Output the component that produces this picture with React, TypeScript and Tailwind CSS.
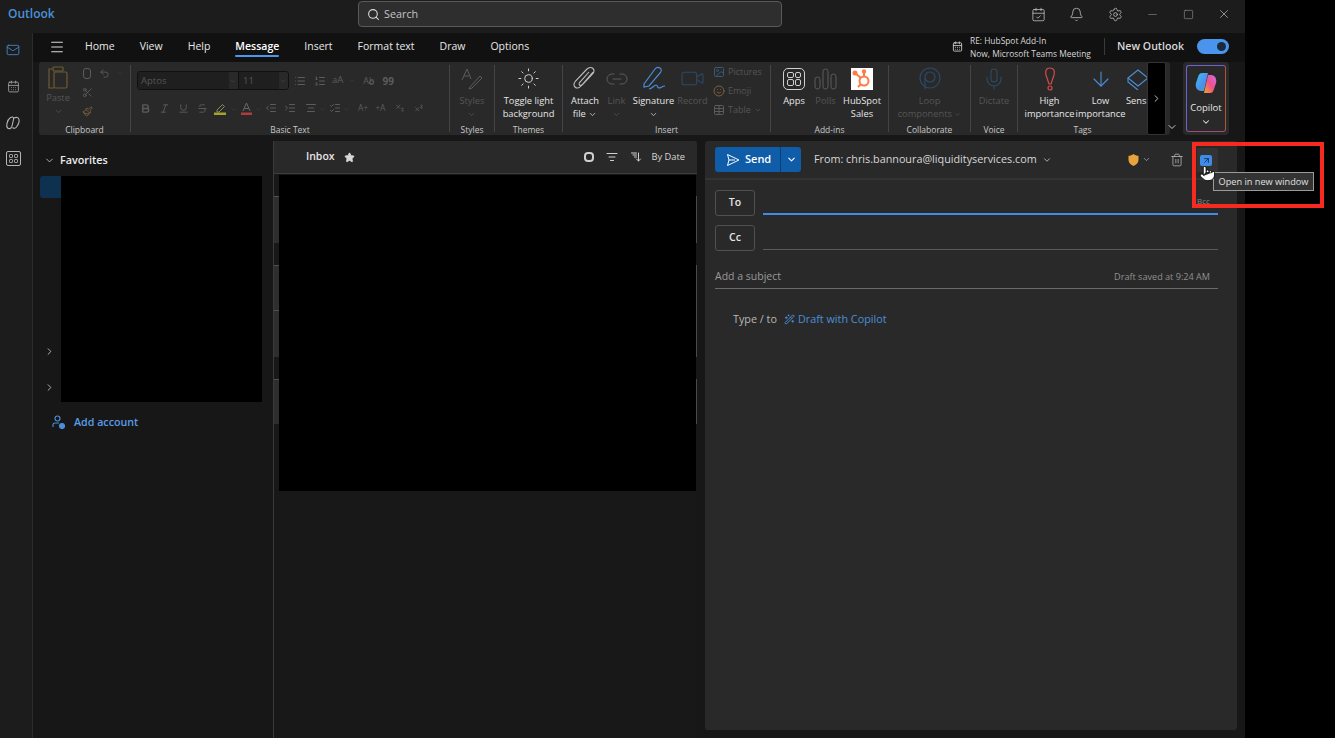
import React from "react";
import {
  Search, Bell, Settings, Minus, Square, X, Mail, ChevronDown, ChevronRight, Star,
  Trash2, Menu, Scissors, Undo2, Paintbrush, Bold, Italic, Underline, Strikethrough,
  List, ListOrdered, Indent, Outdent, AlignCenter, Subscript, Superscript,
  Sun, Link2, Video, Image, Smile, Table, Mic, ArrowDown, ListFilter,
  ArrowDownWideNarrow, ListChecks, WandSparkles, CalendarDays, CalendarCheck, Pointer, ArrowUpRight
} from "lucide-react";

const dim = "text-[#5c5c5c]";

function Group({ label, w, sep = true, children }: { label: string; w: string; sep?: boolean; children: React.ReactNode }) {
  return (
    <div className={`${w} flex flex-col items-stretch shrink-0 relative ${sep ? "border-r border-[#444]" : ""} my-[3px] h-[67px]`}>
      <div className="flex-1 flex min-h-0">{children}</div>
      <div className="h-[11px] -mb-[3px] leading-[11px] text-[8.5px] text-[#c8c8c8] text-center font-medium">{label}</div>
    </div>
  );
}

function Big({ icon, lines, w, disabled, mt = "mt-[0px]" }: { icon: React.ReactNode; lines: React.ReactNode[]; w: string; disabled?: boolean; mt?: string }) {
  return (
    <div className={`${w} flex flex-col items-center shrink-0 ${mt}`}>
      <div className="h-[27px] flex items-center justify-center">{icon}</div>
      <div className={`text-[9.3px] leading-[13px] text-center font-medium mt-[2px] whitespace-nowrap ${disabled ? "text-[#555]" : "text-[#e6e6e6]"}`}>
        {lines.map((l, i) => <div key={i}>{l}</div>)}
      </div>
    </div>
  );
}

const Chev = ({ c = "text-[#d8d8d8]", s = 9 }: { c?: string; s?: number }) => <ChevronDown size={s} className={`inline ${c}`} strokeWidth={2} />;

const rows = [
  { h: "h-[21px]", light: false },
  { h: "h-[47px]", light: true },
  { h: "h-[22px]", light: false },
  { h: "h-[45px]", light: true },
  { h: "h-[47px]", light: true },
  { h: "h-[22px]", light: false },
  { h: "h-[45px]", light: true },
  { h: "h-[67px]", light: false },
];

export default function App() {
  return (
    <div className="w-[1335px] h-[738px] bg-black relative overflow-hidden flex text-[#e6e6e6]" style={{ fontFamily: '"Open Sans", "Noto Sans", sans-serif' }}>
      <div className="w-[1245px] h-full flex flex-col bg-[#1c1c1c] shrink-0">
        {/* Title bar */}
        <div className="h-[33px] shrink-0 flex items-center relative pl-[8px] pr-[14px]">
          <span className="text-[12px] font-semibold text-[#4a90d9] w-[350px] shrink-0 -mt-[5px]">Outlook</span>
          <div className="w-[424px] h-[26px] shrink-0 rounded-[4px] border border-[#5a5a5a] bg-[#2e2e2e] flex items-center pl-[8px] gap-[4px] -mt-[5px]">
            <Search size={13} className="text-[#dadada]" />
            <span className="text-[10.8px] text-[#c4c4c4]">Search</span>
          </div>
          <div className="flex-1 flex items-center justify-end gap-[23.5px] -mt-[5px] text-[#bdbdbd]">
            <CalendarCheck size={15} strokeWidth={1.3} />
            <Bell size={15} strokeWidth={1.3} />
            <Settings size={15} strokeWidth={1.3} />
            <Minus size={13} strokeWidth={1.2} className="text-[#888]" />
            <Square size={11} strokeWidth={1.3} className="text-[#999]" />
            <X size={14} strokeWidth={1.2} />
          </div>
        </div>

        <div className="flex-1 flex min-h-0">
          {/* Rail */}
          <div className="w-[33px] shrink-0 border-r border-[#2c2c2c] flex flex-col items-center pt-[10px] pr-[6px]">
            <Mail size={14} className="text-[#4a90d9]" strokeWidth={1.4} />
            <CalendarDays size={13} className="text-[#b5b5b5] mt-[23px]" strokeWidth={1.4} />
            <svg width="16" height="16" viewBox="0 0 16 16" fill="none" className="mt-[22px] text-[#b5b5b5]" stroke="currentColor" strokeWidth="1.1">
              <path d="M5.5 2.5c2-1 3.5-.5 3 2L7 11c-.5 2-2 3-3.5 2.5S1.5 11 2 8.500 4 3.500 5.500 2.500Z" />
              <path d="M9 3c2-1 4.500-1 5 1.500S13 10 11.500 12c-1 1.500-3 1.500-4 .5" />
            </svg>
            <div className="mt-[20px] w-[15px] h-[15px] rounded-[2px] border border-[#b5b5b5] grid grid-cols-2 gap-[1px] p-[2px]">
              <span className="border border-[#999] rounded-[1px]" />
              <span className="border border-[#999] rounded-[1px]" />
              <span className="border border-[#999] rounded-[1px]" />
              <span className="border border-[#999] rounded-[1px]" />
            </div>
          </div>

          <div className="flex-1 min-w-0 flex flex-col bg-[#171717]">
            {/* Tabs row */}
            <div className="h-[29px] shrink-0 bg-[#111111] flex items-center pl-[16px] pr-[16px] pb-[2px]">
              <Menu size={16} className="text-[#dcdcdc] mr-[20px]" strokeWidth={1.6} />
              <div className="flex items-center gap-[25px] text-[10.5px] text-[#e8e8e8]">
                <span>Home</span>
                <span>View</span>
                <span>Help</span>
                <span className="relative font-semibold text-white">Message
                  <span className="absolute left-0 right-0 -bottom-[3px] h-[2px] bg-[#4a97ec] rounded" />
                </span>
                <span>Insert</span>
                <span>Format text</span>
                <span>Draw</span>
                <span>Options</span>
              </div>
              <div className="flex-1" />
              <CalendarDays size={11} className="text-[#c8c8c8] mr-[7px]" />
              <div className="text-[8.4px] leading-[13px] text-[#d8d8d8] font-medium w-[134px]">
                <div>RE: HubSpot Add-In</div>
                <div>Now, Microsoft Teams Meeting</div>
              </div>
              <span className="h-[17px] w-px bg-[#3a3a3a] mr-[12px]" />
              <span className="text-[10.6px] font-semibold text-[#d8d8d8] w-[80px] whitespace-nowrap">New Outlook</span>
              <div className="w-[32px] h-[15px] rounded-full bg-[#4b94ee] flex items-center justify-end pr-[3px]">
                <span className="w-[9px] h-[9px] rounded-full bg-[#1b2a3d]" />
              </div>
            </div>

            {/* Ribbon */}
            <div className="h-[73px] shrink-0 flex pl-[6px] pr-[15px]">
              <div className="w-[1131px] bg-[#292929] rounded-[3px] flex relative shrink-0">
                <Group label="Clipboard" w="w-[92px]">
                  <div className="w-[38px] flex flex-col items-center shrink-0">
                    <div className="h-[26px] flex items-center justify-center">
                      <svg width="22" height="24" viewBox="0 0 22 24" fill="none" stroke="#6f5a34" strokeWidth="1.2"><path d="M5 3H2v19h5" /><rect x="7" y="6" width="13" height="16" rx="1.500" /><rect x="6" y="1" width="10" height="4" rx="1" /></svg>
                    </div>
                    <div className="text-[9.3px] leading-[13px] text-center font-medium text-[#555]">Paste</div>
                    <div className="leading-[13px]"><Chev c="text-[#555]" /></div>
                  </div>
                  <div className="flex flex-col gap-[8px] pt-[3px] pl-[5px]">
                    <div className="flex items-center gap-[7px]">
                      <span className="w-[8px] h-[11px] mx-[1px] rounded-[3px] border border-[#5c5c5c]" />
                      <Undo2 size={11} className={dim} />
                      <Chev c="text-[#444]" s={7} />
                    </div>
                    <Scissors size={11} className={dim} />
                    <Paintbrush size={11} className="text-[#7a6238]" />
                  </div>
                </Group>
                <Group label="Basic Text" w="w-[319px]">
                  <div className="pl-[6px] pt-[6px] flex flex-col gap-[6px]">
                    <div className="flex items-center gap-[5px]">
                      <div className="flex h-[19px] w-[152px] rounded-[3px] border border-[#111] overflow-hidden">
                        <div className="w-[101px] flex items-center border-r border-[#111] text-[9.5px] text-[#555]">
                          <span className="w-[91px] h-full bg-[#1f1f1f] pl-[3px] leading-[17px]">Aptos</span><Chev c="text-[#444]" s={8} />
                        </div>
                        <div className="flex-1 flex items-center text-[9.5px] text-[#555]">
                          <span className="w-[40px] h-full bg-[#1f1f1f] pl-[4px] leading-[17px]">11</span><Chev c="text-[#444]" s={8} />
                        </div>
                      </div>
                      <List size={12} className={dim} />
                      <ListOrdered size={12} className={`${dim} ml-[3px]`} />
                      <span className="text-[9.5px] text-[#5c5c5c] ml-[1px]">aA</span>
                      <Chev c="text-[#444]" s={7} />
                      <span className="text-[9px] text-[#5c5c5c] ml-[3px] relative">Ab<span className="absolute left-[6px] top-[6px] w-[5px] h-[5px] rounded-full border border-[#5c5c5c]" /></span>
                      <span className="text-[10px] leading-[10px] font-bold text-[#5c5c5c] ml-[3px]">99</span>
                    </div>
                    <div className="flex items-center gap-[5px] pl-[3px]">
                      <Bold size={11} className={dim} strokeWidth={3} />
                      <Italic size={11} className={`${dim} ml-[3px]`} />
                      <Underline size={11} className={`${dim} ml-[3px]`} />
                      <Strikethrough size={11} className={`${dim} ml-[3px]`} />
                      <svg width="14" height="13" viewBox="0 0 14 13" fill="none" className="ml-[1px]">
                        <path d="M3 8 8.500 2.500l2 2L5 10H3Z" stroke="#8a8a5c" strokeWidth="1" />
                        <rect x="0" y="10.500" width="12" height="2.500" fill="#a8a22c" />
                      </svg>
                      <span className="-ml-[3px]"><Chev c="text-[#444]" s={7} /></span>
                      <svg width="13" height="13" viewBox="0 0 13 13" fill="none" className="-ml-[2px]">
                        <path d="M3 9 6.500 1 10 9M4.500 6.500h4" stroke="#6a6a6a" strokeWidth="1" />
                        <rect x="1" y="10.500" width="11" height="2.500" fill="#b23a3a" />
                      </svg>
                      <span className="-ml-[3px]"><Chev c="text-[#444]" s={7} /></span>
                      <Outdent size={12} className={`${dim} -ml-[2px]`} />
                      <Indent size={12} className={`${dim} ml-[2px]`} />
                      <AlignCenter size={12} className={`${dim} ml-[4px]`} />
                      <span className="-ml-[3px]"><Chev c="text-[#444]" s={7} /></span>
                      <ListChecks size={12} className={`${dim} -ml-[2px]`} />
                      <span className="-ml-[3px]"><Chev c="text-[#444]" s={7} /></span>
                      <span className="text-[8.5px] text-[#5c5c5c] ml-[3px]">A+</span>
                      <span className="text-[8.5px] text-[#5c5c5c] ml-[2px]">+A</span>
                      <Subscript size={10} className={`${dim} ml-[4px]`} />
                      <Superscript size={10} className={`${dim} ml-[4px]`} />
                    </div>
                  </div>
                </Group>
                <Group label="Styles" w="w-[45px]">
                  <Big w="w-full" disabled icon={<svg width="22" height="22" viewBox="0 0 22 22" fill="none" stroke="#5c5c5c" strokeWidth="1"><path d="M1 12 6 1l4 10M3 8h5" /><path d="m9 19 10-11 2 2-10 10-3 1Z" /></svg>} lines={["Styles", <Chev c="text-[#555]" />]} />
                </Group>
                <Group label="Themes" w="w-[68px]">
                  <Big w="w-full" icon={<Sun size={23} strokeWidth={1} className="text-[#d8d8d8]" />} lines={["Toggle light", "background"]} />
                </Group>
                <Group label="Insert" w="w-[208px]">
                  <div className="flex pl-[4px]">
                    <Big w="w-[36px]" icon={
                      <svg width="24" height="25" viewBox="0 0 24 25" fill="none" stroke="#bdbdbd" strokeWidth="1.1">
                        <path d="M20 6 8 20c-2 2.500-4.500 2.500-6 1s-1-4 .5-6L14 3c2-2 4.500-2 6-.5s1 3.500 0 5L9.500 18.500c-1 1-2.500 1-3 .5s-.5-2 .5-3l9-10" />
                      </svg>} lines={["Attach", <span>file <Chev /></span>]} />
                    <Big w="w-[27px]" disabled icon={<Link2 size={24} strokeWidth={1} className={dim} />} lines={["Link", <Chev c="text-[#555]" />]} />
                    <Big w="w-[47px]" icon={
                      <svg width="24" height="25" viewBox="0 0 24 25" fill="none" stroke="#4a8fdc" strokeWidth="1.2">
                        <path d="M2 18 13 3c1.500-2 3.500-2 5-1s1.500 3 .5 4.500L7 20l-5 1Z" />
                        <path d="M7 23c3 0 5-4 7-4s1 3 3 3 3-2 6-2" />
                      </svg>} lines={["Signature", <Chev />]} />
                    <Big w="w-[31px]" disabled icon={<Video size={25} strokeWidth={1} className="text-[#2c4a66]" />} lines={["Record"]} />
                    <div className="flex flex-col gap-[5px] pl-[5px] text-[9px] text-[#555]">
                      <div className="flex items-center gap-[3px] h-[14px]"><Image size={12} className="text-[#3a5878]" />Pictures</div>
                      <div className="flex items-center gap-[3px] h-[14px]"><Smile size={12} className="text-[#7a6238]" />Emoji</div>
                      <div className="flex items-center gap-[3px] h-[14px]"><Table size={12} className={dim} />Table <Chev c="text-[#555]" s={8} /></div>
                    </div>
                  </div>
                </Group>
                <Group label="Add-ins" w="w-[118px]">
                  <div className="flex pl-[4px]">
                    <Big w="w-[38px]" icon={
                      <span className="w-[22px] h-[22px] rounded-[5px] border border-[#d0d0d0] grid grid-cols-2 gap-[1px] p-[3px]">
                        <span className="border border-[#d0d0d0] rounded-[2px]" /><span className="border border-[#d0d0d0] rounded-[2px]" />
                        <span className="border border-[#d0d0d0] rounded-[2px]" /><span className="border border-[#d0d0d0] rounded-[2px]" />
                      </span>} lines={["Apps"]} />
                    <Big w="w-[25px]" disabled icon={<svg width="24" height="22" viewBox="0 0 24 22" fill="none" stroke="#5c5c5c" strokeWidth="1"><rect x="1" y="9" width="5" height="12" rx="2.500" /><rect x="9" y="1" width="5" height="20" rx="2.500" /><rect x="17" y="6" width="5" height="15" rx="2.500" /></svg>} lines={["Polls"]} />
                    <Big w="w-[48px]" icon={
                      <span className="w-[22px] h-[22px] bg-white flex items-center justify-center">
                        <svg width="20" height="20" viewBox="0 0 20 20" fill="none" stroke="#ff7a45" strokeWidth="2"><circle cx="12" cy="12" r="4.500" /><path d="M12 7V3M9 9 3 4M9 15l-3 3" /><circle cx="3" cy="4" r="1.500" fill="#ff7a45" /><circle cx="12" cy="2.500" r="1.200" fill="#ff7a45" /></svg>
                      </span>} lines={["HubSpot", "Sales"]} />
                  </div>
                </Group>
                <Group label="Collaborate" w="w-[82px]">
                  <Big w="w-full" disabled icon={<svg width="24" height="24" viewBox="0 0 24 24" fill="none" stroke="#2c4a66" strokeWidth="1.2"><circle cx="12" cy="11" r="10" /><circle cx="12" cy="10" r="5" /><path d="M7 11v11" /></svg>} lines={["Loop", <span>components <Chev c="text-[#555]" s={7} /></span>]} />
                </Group>
                <Group label="Voice" w="w-[47px]">
                  <Big w="w-full" disabled icon={<Mic size={24} strokeWidth={1.1} className="text-[#2c4a66]" />} lines={["Dictate"]} />
                </Group>
                <Group label="Tags" w="w-[129px]" sep={false}>
                  <div className="flex pl-[6px]">
                    <Big w="w-[51px]" icon={
                      <svg width="12" height="24" viewBox="0 0 12 24" fill="none" stroke="#d9494f" strokeWidth="1.2"><path d="M6 1C2 1 1 4 2 8l3 9h2l3-9c1-4 0-7-4-7Z" /><circle cx="6" cy="21" r="2" /></svg>} lines={["High", "importance"]} />
                    <Big w="w-[51px]" icon={<ArrowDown size={24} strokeWidth={1.1} className="text-[#4a90d9]" />} lines={["Low", "importance"]} />
                    <div className="w-[21px] overflow-hidden shrink-0">
                      <div className="w-[40px] flex flex-col items-start">
                        <div className="h-[27px] flex items-center">
                          <svg width="24" height="22" viewBox="0 0 24 22" fill="none" stroke="#4a90d9" strokeWidth="1.1"><path d="m2 10 10-8 10 8-10 8Z" /><path d="M2 10v4l10 8" /></svg>
                        </div>
                        <div className="text-[9.3px] leading-[13px] font-medium mt-[2px] text-[#e6e6e6]">Sensitivity</div>
                      </div>
                    </div>
                  </div>
                </Group>
                <div className="w-[19px] h-full shrink-0 bg-black rounded-[2px] border border-[#333] flex items-center justify-center">
                  <ChevronRight size={11} className="text-[#d0d0d0]" />
                </div>
                <div className="flex-1 flex items-end justify-center pb-[2px]"><ChevronDown size={12} className="text-[#c8c8c8]" /></div>
              </div>
              <div className="ml-[13px] w-[46px] h-[73px] bg-[#292929] rounded-[4px] p-[3px] shrink-0">
                <div className="w-full h-full rounded-[3px] border border-[#6f62d0] flex flex-col items-center pt-[5px]" style={{ borderRightColor: "#b4503c", borderBottomColor: "#9a4f78" }}>
                  <svg width="24" height="24" viewBox="0 0 24 24">
                    <defs>
                      <linearGradient id="cp1" x1="0" y1="0" x2="1" y2="1"><stop offset="0" stopColor="#38c8e8" /><stop offset=".6" stopColor="#4f8cf0" /><stop offset="1" stopColor="#30c070" /></linearGradient>
                      <linearGradient id="cp2" x1="0" y1="1" x2="1" y2="0"><stop offset="0" stopColor="#f5a030" /><stop offset=".5" stopColor="#f0508a" /><stop offset="1" stopColor="#c870e8" /></linearGradient>
                    </defs>
                    <path d="M8 2h6l-4 18H7C3 20 1 16 2 12l2-6c1-3 2-4 4-4Z" fill="url(#cp1)" />
                    <path d="M16 22h-6l4-18h3c4 0 6 4 5 8l-2 6c-1 3-2 4-4 4Z" fill="url(#cp2)" />
                  </svg>
                  <span className="text-[9.5px] leading-[12px] mt-[7px] text-[#e6e6e6]">Copilot</span>
                  <ChevronDown size={10} className="text-[#e6e6e6] mt-[3px]" strokeWidth={2.5} />
                </div>
              </div>
            </div>

            {/* Main */}
            <div className="flex-1 min-h-0 flex pt-[6px]">
              {/* Nav */}
              <div className="w-[240px] shrink-0 flex flex-col pl-[7px] relative">
                <div className="h-[35px] flex items-center gap-[5px] pl-[4px] pt-[4px] shrink-0">
                  <ChevronDown size={11} className="text-[#bbb]" />
                  <span className="text-[10.8px] font-semibold text-[#ececec]">Favorites</span>
                </div>
                <div className="flex shrink-0">
                  <div className="w-[21px] h-[22px] bg-[#0e3150] rounded-l-[3px] shrink-0" />
                  <div className="w-[201px] h-[226px] bg-black shrink-0" />
                </div>
                <div className="flex items-center gap-[9px] mt-[12px] pl-[12px]">
                  <svg width="13" height="14" viewBox="0 0 13 14" fill="none" stroke="#4a90d9" strokeWidth="1.1">
                    <circle cx="5.500" cy="3.500" r="2.500" />
                    <path d="M1 12V9.500C1 8.500 2 8 3 8h4" />
                    <circle cx="10" cy="11" r="2.500" fill="#4a90d9" />
                  </svg>
                  <span className="text-[10.7px] font-semibold text-[#5a9ce8]">Add account</span>
                </div>
                <ChevronRight size={11} className="absolute left-[11px] top-[205px] text-[#bbb]" />
                <ChevronRight size={11} className="absolute left-[11px] top-[241px] text-[#bbb]" />
              </div>

              {/* Message list */}
              <div className="w-[424px] shrink-0 flex flex-col border-l border-[#3a3a3a] bg-[#181818]">
                <div className="h-[33px] shrink-0 bg-[#292929] border-b border-[#3d3d3d] rounded-tr-[3px] flex items-center pl-[32px] pr-[12px]">
                  <span className="text-[10.5px] font-semibold text-[#e6e6e6]">Inbox</span>
                  <Star size={11} className="ml-[9px] text-[#d8d8d8]" fill="#d8d8d8" />
                  <div className="flex-1" />
                  <span className="w-[10px] h-[10px] rounded-[4px] border-2 border-[#cfcfcf]" />
                  <ListFilter size={12} className="ml-[12px] text-[#d0d0d0]" />
                  <ArrowDownWideNarrow size={12} className="ml-[12px] text-[#d0d0d0] -scale-x-100" />
                  <span className="ml-[9px] text-[9.3px] font-medium text-[#d8d8d8]">By Date</span>
                </div>
                <div className="flex pt-[1px] shrink-0">
                  <div className="w-[5px] shrink-0 flex flex-col">
                    {rows.map((r, i) => (
                      <div key={i} className={`${r.h} ${r.light ? "bg-[#2e2e2e] border-t border-[#505050]" : "bg-[#181818]"}`} />
                    ))}
                  </div>
                  <div className="w-[417px] h-[316px] bg-black shrink-0" />
                  <div className="w-[1px] shrink-0 flex flex-col">
                    {rows.map((r, i) => (
                      <div key={i} className={`${r.h} ${r.light ? "bg-[#4a4a4a]" : "bg-[#181818]"}`} />
                    ))}
                  </div>
                </div>
              </div>

              {/* Compose */}
              <div className="w-[532px] shrink-0 ml-[8px] mb-[8px] bg-[#292929] rounded-[3px] flex flex-col">
                <div className="h-[39px] shrink-0 border-b-2 border-[#333] flex items-center pl-[10px] pr-[19px]">
                  <div className="flex h-[25px] w-[86px] rounded-[3px] bg-[#0f5ca8] text-white overflow-hidden shrink-0">
                    <div className="w-[66px] flex items-center pl-[11px] gap-[5px] border-r border-[#0a3f74]">
                      <svg width="14" height="14" viewBox="0 0 14 14" fill="none" stroke="currentColor" strokeWidth="1"><path d="M1.500 1.500 13 7 1.500 12.500 3 7ZM3 7h6" /></svg>
                      <span className="text-[11px] font-semibold">Send</span>
                    </div>
                    <div className="flex-1 flex items-center justify-center"><ChevronDown size={11} strokeWidth={2.5} /></div>
                  </div>
                  <span className="ml-[13px] text-[10.8px] font-medium text-[#d8d8d8] whitespace-nowrap">From: chris.bannoura@liquidityservices.com</span>
                  <ChevronDown size={10} className="ml-[5px] text-[#c8c8c8]" />
                  <div className="flex-1" />
                  <svg width="11" height="12" viewBox="0 0 11 12"><path d="M5.500 0C4 1.200 2.500 1.700.5 1.800V6c0 3 2.500 5 5 6 2.500-1 5-3 5-6V1.800C8.500 1.700 7 1.200 5.500 0Z" fill="#e8a33d" /></svg>
                  <ChevronDown size={9} className="ml-[3px] text-[#a8a8a8]" />
                  <Trash2 size={14} strokeWidth={1.2} className="ml-[19px] text-[#c8c8c8]" />
                  <div className="ml-[13px] w-[21px] h-[24px] rounded-[2px] bg-[#333] flex items-start justify-start pt-[7px] pl-[3px]">
                    <span className="w-[12px] h-[11px] rounded-[2px] bg-[#3f8ce8] flex items-center justify-center">
                      <ArrowUpRight size={9} className="text-[#123]" strokeWidth={2} />
                    </span>
                  </div>
                </div>
                <div className="flex items-end pl-[10px] pr-[19px] mt-[10px] h-[26px]">
                  <div className="w-[40px] h-[26px] rounded-[3px] border border-[#505050] flex items-center justify-center text-[10.5px] font-semibold">To</div>
                  <div className="flex-1 ml-[8px] h-[2px] mb-[1px] bg-[#3f8ce8]" />
                </div>
                <div className="flex items-end pl-[10px] pr-[19px] mt-[9px] h-[26px]">
                  <div className="w-[40px] h-[26px] rounded-[3px] border border-[#505050] flex items-center justify-center text-[10.5px] font-semibold">Cc</div>
                  <div className="flex-1 ml-[8px] h-[1px] mb-[1px] bg-[#5a5a5a]" />
                </div>
                <div className="ml-[10px] mr-[19px] mt-[17px] h-[21px] border-b border-[#6a6a6a] flex items-center justify-between pb-[3px] pr-[8px]">
                  <span className="text-[10.5px] text-[#9a9a9a]">Add a subject</span>
                  <span className="text-[9.1px] text-[#909090]">Draft saved at 9:24 AM</span>
                </div>
                <div className="flex items-center pl-[28px] mt-[22px] text-[10.8px] text-[#b8b8b8]">
                  <span>Type / to</span>
                  <WandSparkles size={11} className="ml-[7px] text-[#4a90d9]" />
                  <span className="ml-[3px] text-[#4a90d9]">Draft with Copilot</span>
                </div>
              </div>
            </div>
          </div>
        </div>
      </div>

      {/* Overlay: tooltip + red annotation */}
      <div className="absolute left-[1213px] top-[172px] w-[101px] h-[19px] bg-[#333] border border-[#9a9a9a] flex items-center justify-center text-[9.2px] text-[#e0e0e0] whitespace-nowrap">Open in new window</div>
      <span className="absolute left-[1197px] top-[197px] text-[8px] text-[#888] leading-[8px]">Bcc</span>
      <div className="absolute left-[1192px] top-[142px] w-[132px] h-[66px] border-[4px] border-[#f62a20]" />
      <Pointer size={17} className="absolute left-[1199px] top-[165px] text-black" fill="white" strokeWidth={1.2} />
    </div>
  );
}
